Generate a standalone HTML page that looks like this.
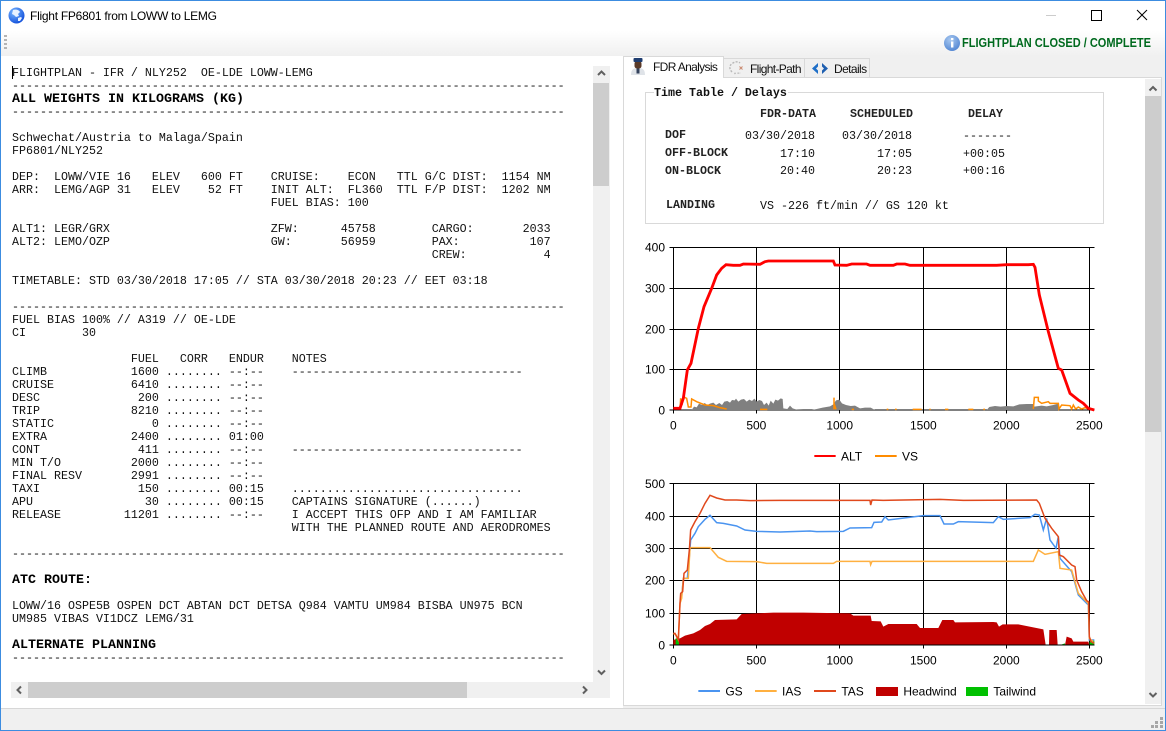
<!DOCTYPE html>
<html><head><meta charset="utf-8"><title>Flight FP6801 from LOWW to LEMG</title>
<style>
html,body{margin:0;padding:0;width:1166px;height:731px;overflow:hidden;background:#fff}
*{box-sizing:border-box}
.a{position:absolute}
#win{position:absolute;left:0;top:0;width:1166px;height:731px;background:#fff;overflow:hidden;font-family:"Liberation Sans",sans-serif;font-size:12px;color:#000}
#frame{position:absolute;left:0;top:0;width:1166px;height:731px;border:1px solid #3c8ce0;pointer-events:none;z-index:50}
#tb{position:absolute;left:1px;top:31px;width:1164px;height:25px;background:linear-gradient(#fff,#f0f0f0)}
pre{margin:0;font-family:"Liberation Mono",monospace;font-size:11.67px;line-height:13px;color:#111}
pre b{font-size:13.33px;line-height:13px;font-weight:bold;color:#000}
.m{position:absolute;font-family:"Liberation Mono",monospace;font-size:11.67px;line-height:14px;color:#111;white-space:pre}
.h{font-weight:bold;color:#222}
.t{position:absolute;white-space:pre;font-size:12px;line-height:14px;color:#111}
.th{fill:#000;font-family:"Liberation Sans",sans-serif;font-size:36px}
</style></head><body>
<div id="win">
<svg class="a" style="left:8px;top:7px" width="17" height="17" viewBox="0 0 17 17"><defs><radialGradient id="g1" cx="0.35" cy="0.3" r="0.8"><stop offset="0" stop-color="#7ab8ff"/><stop offset="1" stop-color="#0a48d8"/></radialGradient></defs><circle cx="8.5" cy="8.5" r="8" fill="url(#g1)"/><path d="M5 3C8 2 11 3 12 5L10 7 11 9 8 10 6 8 4 7ZM10 11l3-1 1 1-2 3-2 0Z" fill="#e8f2ff"/></svg>
<div class="t" style="left:30px;top:9px;color:#000;letter-spacing:-.26px">Flight FP6801 from LOWW to LEMG</div>
<div class="a" style="left:1046px;top:15px;width:10px;height:1px;background:#ccc"></div>
<div class="a" style="left:1091px;top:10px;width:11px;height:11px;border:1px solid #000"></div>
<svg class="a" style="left:1136px;top:9px" width="12" height="12" viewBox="0 0 12 12"><path d="M1 1L11 11M11 1L1 11" stroke="#000" stroke-width="1" fill="none"/></svg>

<div id="tb"></div>
<div class="a" style="left:4px;top:35px;width:3px;height:14px;background:repeating-linear-gradient(#b4b4b4 0 2px,transparent 2px 4px)"></div>
<svg class="a" style="left:943px;top:34px" width="18" height="18" viewBox="0 0 18 18"><defs><radialGradient id="g2" cx="0.4" cy="0.3" r="0.8"><stop offset="0" stop-color="#a8c8f0"/><stop offset="1" stop-color="#4a80d0"/></radialGradient></defs><circle cx="9" cy="9" r="8" fill="url(#g2)"/><rect x="8" y="7.5" width="2.4" height="6" fill="#fff"/><rect x="8" y="4" width="2.4" height="2.2" fill="#fff"/></svg>
<svg class="a" style="left:962px;top:34px" width="192" height="18"><text x="0" y="13" textLength="189" lengthAdjust="spacingAndGlyphs" font-family="Liberation Sans" font-size="13" font-weight="bold" fill="#006a1e">FLIGHTPLAN CLOSED / COMPLETE</text></svg>

<!-- left panel -->
<pre class="a" style="left:12px;top:67px;width:580px;height:615px;overflow:hidden">FLIGHTPLAN - IFR / NLY252  OE-LDE LOWW-LEMG
-------------------------------------------------------------------------------
<b>ALL WEIGHTS IN KILOGRAMS (KG)</b>
-------------------------------------------------------------------------------

Schwechat/Austria to Malaga/Spain
FP6801/NLY252

DEP:  LOWW/VIE 16   ELEV   600 FT    CRUISE:    ECON   TTL G/C DIST:  1154 NM
ARR:  LEMG/AGP 31   ELEV    52 FT    INIT ALT:  FL360  TTL F/P DIST:  1202 NM
                                     FUEL BIAS: 100

ALT1: LEGR/GRX                       ZFW:      45758        CARGO:       2033
ALT2: LEMO/OZP                       GW:       56959        PAX:          107
                                                            CREW:           4

TIMETABLE: STD 03/30/2018 17:05 // STA 03/30/2018 20:23 // EET 03:18

-------------------------------------------------------------------------------
FUEL BIAS 100% // A319 // OE-LDE
CI        30

                 FUEL   CORR   ENDUR    NOTES
CLIMB            1600 ........ --:--    ---------------------------------
CRUISE           6410 ........ --:--
DESC              200 ........ --:--
TRIP             8210 ........ --:--
STATIC              0 ........ --:--
EXTRA            2400 ........ 01:00
CONT              411 ........ --:--    ---------------------------------
MIN T/O          2000 ........ --:--
FINAL RESV       2991 ........ --:--
TAXI              150 ........ 00:15    .................................
APU                30 ........ 00:15    CAPTAINS SIGNATURE (......)
RELEASE         11201 ........ --:--    I ACCEPT THIS OFP AND I AM FAMILIAR
                                        WITH THE PLANNED ROUTE AND AERODROMES

-------------------------------------------------------------------------------

<b>ATC ROUTE:</b>

LOWW/16 OSPE5B OSPEN DCT ABTAN DCT DETSA Q984 VAMTU UM984 BISBA UN975 BCN
UM985 VIBAS VI1DCZ LEMG/31

<b>ALTERNATE PLANNING</b>
-------------------------------------------------------------------------------</pre>
<div class="a" style="left:12px;top:66px;width:1px;height:13px;background:#000"></div>

<!-- left scrollbars -->
<div class="a" style="left:593px;top:66px;width:17px;height:632px;background:#f0f0f0"></div>
<div class="a" style="left:593px;top:83px;width:16px;height:103px;background:#cdcdcd"></div>
<div class="a" style="left:11px;top:682px;width:599px;height:16px;background:#f0f0f0"></div>
<div class="a" style="left:28px;top:682px;width:439px;height:16px;background:#cdcdcd"></div>
<svg class="a" style="left:593px;top:66px" width="17" height="632" fill="none" stroke="#606060" stroke-width="2"><path d="M5 9L8.500 5.500 12 9"/><path d="M5 604.500L8.500 608 12 604.500"/></svg>
<svg class="a" style="left:11px;top:682px" width="582" height="16" fill="none" stroke="#606060" stroke-width="2"><path d="M10 4.500L6.500 8 10 11.500"/><path d="M572 4.500L575.500 8 572 11.500"/></svg>

<!-- tabs -->
<div class="a" style="left:623px;top:56px;width:542px;height:652px;background:#f0f0f0"></div>
<div class="a" style="left:623px;top:77px;width:539px;height:629px;background:#fff;border:1px solid #d9d9d9"></div>
<div class="a" style="left:723px;top:58px;width:82px;height:20px;background:#f0f0f0;border:1px solid #d9d9d9"></div>
<div class="a" style="left:804px;top:58px;width:66px;height:20px;background:#f0f0f0;border:1px solid #d9d9d9"></div>
<div class="a" style="left:623px;top:56px;width:101px;height:22px;background:#fff;border:1px solid #d9d9d9;border-bottom:0"></div>
<div class="t" style="left:653px;top:60px;letter-spacing:-.65px">FDR Analysis</div>
<div class="t" style="left:750px;top:62px;letter-spacing:-.65px">Flight-Path</div>
<div class="t" style="left:834px;top:62px;letter-spacing:-.6px">Details</div>
<svg class="a" style="left:630px;top:57px" width="16" height="18" viewBox="0 0 16 18"><path d="M1 18C1 13 3 11.500 6 11L10 11C13 11.500 15 13 15 18Z" fill="#dfe3e8"/><rect x="4.500" y="4" width="7" height="7.500" rx="2.500" fill="#5a3a28"/><rect x="3.500" y="1" width="9" height="4" rx="1" fill="#1f3d70"/><rect x="6.500" y="11.500" width="3" height="5" fill="#33415c"/></svg>
<svg class="a" style="left:728px;top:60px" width="16" height="15" viewBox="0 0 16 15" fill="none"><path d="M4 12C1 9 1 5 5 3 8 1 11 2 12 3" stroke="#b8b8b8" stroke-width="1.400" stroke-dasharray="2 1.400"/><path d="M6 13.500L13 13" stroke="#c4c4c4" stroke-width="1.400" stroke-dasharray="2 1.400"/><path d="M11.500 6.500l3 3M14.500 6.500l-3 3" stroke="#c98a70" stroke-width="1"/></svg>
<svg class="a" style="left:811px;top:62px" width="18" height="13" viewBox="0 0 18 13"><path d="M7 1L1 6.500 7 12V8.500L5 6.500 7 4.500Z" fill="#1f6fc8"/><path d="M11 1L17 6.500 11 12V8.500L13 6.500 11 4.500Z" fill="#1f5fb0"/></svg>

<!-- right scrollbar -->
<div class="a" style="left:1145px;top:79px;width:16px;height:625px;background:#f0f0f0"></div>
<div class="a" style="left:1145px;top:96px;width:16px;height:336px;background:#cdcdcd"></div>
<svg class="a" style="left:1145px;top:79px" width="16" height="625" fill="none" stroke="#606060" stroke-width="2"><path d="M4.500 11.500L8 8 11.500 11.500"/><path d="M4.500 614L8 617.500 11.500 614"/></svg>

<!-- group box -->
<div class="a" style="left:645px;top:92px;width:459px;height:132px;border:1px solid #d9d9d9"></div>
<div class="m h" style="left:654px;top:86px;background:#fff;padding-right:1px;color:#111">Time Table / Delays</div>
<div class="m h" style="left:760px;top:107px">FDR-DATA</div>
<div class="m h" style="left:850px;top:107px">SCHEDULED</div>
<div class="m h" style="left:968px;top:107px">DELAY</div>
<div class="m h" style="left:665px;top:128px">DOF</div>
<div class="m" style="left:745px;top:129px">03/30/2018</div>
<div class="m" style="left:842px;top:129px">03/30/2018</div>
<div class="m" style="left:963px;top:129px">-------</div>
<div class="m h" style="left:665px;top:146px">OFF-BLOCK</div>
<div class="m" style="left:780px;top:147px">17:10</div>
<div class="m" style="left:877px;top:147px">17:05</div>
<div class="m" style="left:963px;top:147px">+00:05</div>
<div class="m h" style="left:665px;top:164px">ON-BLOCK</div>
<div class="m" style="left:780px;top:164px">20:40</div>
<div class="m" style="left:877px;top:164px">20:23</div>
<div class="m" style="left:963px;top:164px">+00:16</div>
<div class="m h" style="left:666px;top:198px">LANDING</div>
<div class="m" style="left:760px;top:199px">VS -226 ft/min // GS 120 kt</div>

<!-- chart 1 -->
<svg class="a" style="left:630px;top:235px" width="480" height="240" viewBox="0 0 1440 720">
<g stroke="#000" stroke-width="3" shape-rendering="crispEdges" fill="none">
<path d="M130 37V536M379 37V536M629 37V536M880 37V536M1129 37V536M1378 37V536"/>
<path d="M118 37H1393M118 160H1393M118 283H1393M118 403H1393M118 525H1393"/>
</g>
<path fill="#808080" d="M185 525 192 515 200 517 207 506 216 510 224 504 232 510 240 506 250 503 258 510 268 504 276 510 283 500 292 498 300 503 306 495 314 496 318 491 325 500 333 494 342 492 350 500 358 494 366 498 373 491 380 500 388 495 396 498 402 510 410 503 416 512 422 497 430 506 436 494 444 497 452 490 458 492 460 520 472 522 480 512 488 520 500 524 520 525Z"/>
<path fill="#808080" d="M545 525 560 522 578 518 600 514 610 508 618 496 628 494 636 505 648 510 662 513 675 512 690 520 705 518 722 518 735 525Z"/>
<path fill="#808080" d="M1070 525 1078 516 1095 513 1112 515 1130 513 1150 514 1168 508 1190 507 1210 507 1213 515 1235 512 1250 514 1270 510 1285 506 1288 525Z"/>
<polyline fill="none" stroke="#ff8c00" stroke-width="4.500" points="150,522 152,490 156,510 160,485 170,490 175,516 183,516 185,492 200,500 225,510 250,512 270,518 290,522"/>
<path fill="none" stroke="#ff8c00" stroke-width="4.500" d="M390 523H412M612 523V488M612 505L618 523M665 523H672M770 523H775M795 523H800M848 523H875M898 523H902M945 523H955M1015 523H1030M1060 523H1065"/>
<polyline fill="none" stroke="#ff8c00" stroke-width="4.500" points="1210,522 1213,487 1225,487 1225,498 1235,505 1255,500 1260,505 1285,505 1287,522 1295,510 1320,512 1325,522 1330,510 1337,522 1345,516 1355,522 1365,518 1378,522 1393,524"/>
<polyline fill="none" stroke="#ff0000" stroke-width="8.500" points="130,520 150,520 160,490 172,405 183,385 205,280 222,215 245,160 260,120 275,100 288,89 310,91 330,91 340,87 390,88 405,80 415,78 610,78 615,90 650,91 665,87 710,87 720,91 790,91 800,87 825,87 840,91 1100,91 1130,89 1195,89 1210,88 1215,97 1228,180 1255,290 1285,400 1295,405 1320,475 1345,495 1360,505 1375,520 1393,525"/>
<g class="th" text-anchor="end"><text x="105" y="50">400</text><text x="105" y="173">300</text><text x="105" y="295">200</text><text x="105" y="416">100</text><text x="105" y="538">0</text></g>
<g class="th" text-anchor="middle"><text x="130" y="583">0</text><text x="379" y="583">500</text><text x="629" y="583">1000</text><text x="880" y="583">1500</text><text x="1129" y="583">2000</text><text x="1378" y="583">2500</text></g>
<path d="M553 663H617" stroke="#ff0000" stroke-width="6"/><path d="M735 663H800" stroke="#ff8c00" stroke-width="6"/>
<g class="th"><text x="633" y="677">ALT</text><text x="816" y="677">VS</text></g>
</svg>

<!-- chart 2 -->
<svg class="a" style="left:630px;top:470px" width="480" height="240" viewBox="0 0 1440 720">
<g stroke="#000" stroke-width="3" shape-rendering="crispEdges" fill="none">
<path d="M130 41V536M379 41V536M629 41V536M880 41V536M1129 41V536M1378 41V536"/>
<path d="M118 41H1393M118 139H1393M118 235H1393M118 331H1393M118 430H1393"/>
</g>
<path fill="#c00000" d="M130 525 130 510 145 505 150 505 165 497 190 490 210 480 225 468 240 462 255 450 320 448 335 432 380 430 430 428 520 428 660 430 670 437 722 437 725 453 752 454 760 470 775 462 860 462 870 474 925 474 937 450 970 450 975 457 1090 456 1100 457 1107 470 1118 463 1165 463 1180 466 1240 478 1247 525 1257 525 1258 480 1280 480 1283 525 1305 525 1310 500 1325 505 1330 515 1375 515 1378 525Z"/>
<path fill="#00c000" d="M137 525V505H147V525ZM1378 525 1380 512H1393V525ZM1290 525 1305 520V525Z"/>
<path d="M118 525H1393" stroke="#000" stroke-width="3" shape-rendering="crispEdges"/>
<polyline fill="none" stroke="#4a94f0" stroke-width="4.500" points="150,400 155,380 160,325 172,325 178,260 182,210 195,190 205,170 225,148 240,136 260,158 280,160 320,168 345,180 380,184 450,186 540,183 560,185 640,184 660,174 725,173 732,157 755,156 765,140 775,150 880,137 930,137 942,162 970,162 985,155 1090,158 1105,140 1120,148 1200,143 1215,133 1228,135 1240,180 1250,145 1260,210 1278,235 1285,200 1290,265 1325,305 1345,375 1375,405 1378,510 1393,510"/>
<polyline fill="none" stroke="#ffb040" stroke-width="4.500" points="130,490 138,495 145,510 150,400 155,385 160,325 175,325 180,233 240,233 265,262 290,274 380,275 410,280 610,280 620,274 720,274 722,284 726,274 1210,274 1225,240 1245,253 1285,245 1290,295 1325,300 1345,370 1375,400 1378,505 1390,515"/>
<polyline fill="none" stroke="#e0481c" stroke-width="4.500" points="130,490 135,490 145,510 150,400 152,370 158,365 162,310 172,300 178,240 182,180 195,155 210,130 225,100 240,76 260,84 285,90 320,90 360,92 450,91 720,91 722,105 726,90 760,91 930,88 1000,91 1220,90 1228,100 1245,145 1265,175 1285,200 1288,255 1300,260 1325,285 1335,290 1340,330 1355,365 1370,392 1376,395 1378,500 1383,515 1393,520"/>
<g class="th" text-anchor="end"><text x="105" y="54">500</text><text x="105" y="152">400</text><text x="105" y="248">300</text><text x="105" y="344">200</text><text x="105" y="443">100</text><text x="105" y="538">0</text></g>
<g class="th" text-anchor="middle"><text x="130" y="583">0</text><text x="379" y="583">500</text><text x="629" y="583">1000</text><text x="880" y="583">1500</text><text x="1129" y="583">2000</text><text x="1378" y="583">2500</text></g>
<path d="M205 663H270" stroke="#4a94f0" stroke-width="6"/><path d="M375 663H440" stroke="#ffb040" stroke-width="6"/><path d="M552 663H618" stroke="#e0481c" stroke-width="6"/>
<rect x="738" y="651" width="66" height="27" fill="#c00000"/><rect x="1008" y="651" width="66" height="27" fill="#00c000"/>
<g class="th"><text x="286" y="677">GS</text><text x="456" y="677">IAS</text><text x="634" y="677">TAS</text><text x="820" y="677">Headwind</text><text x="1090" y="677">Tailwind</text></g>
</svg>

<!-- status bar -->
<div class="a" style="left:1px;top:708px;width:1164px;height:22px;background:#f0f0f0;border-top:1px solid #d7d7d7"></div>
<svg class="a" style="left:1150px;top:716px" width="14" height="13" fill="#a6a6a6"><rect x="10" y="1" width="3" height="3"/><rect x="5" y="5" width="3" height="3"/><rect x="10" y="5" width="3" height="3"/><rect x="1" y="9" width="3" height="3"/><rect x="5" y="9" width="3" height="3"/><rect x="10" y="9" width="3" height="3"/></svg>
<div id="frame"></div>
</div>
</body></html>
